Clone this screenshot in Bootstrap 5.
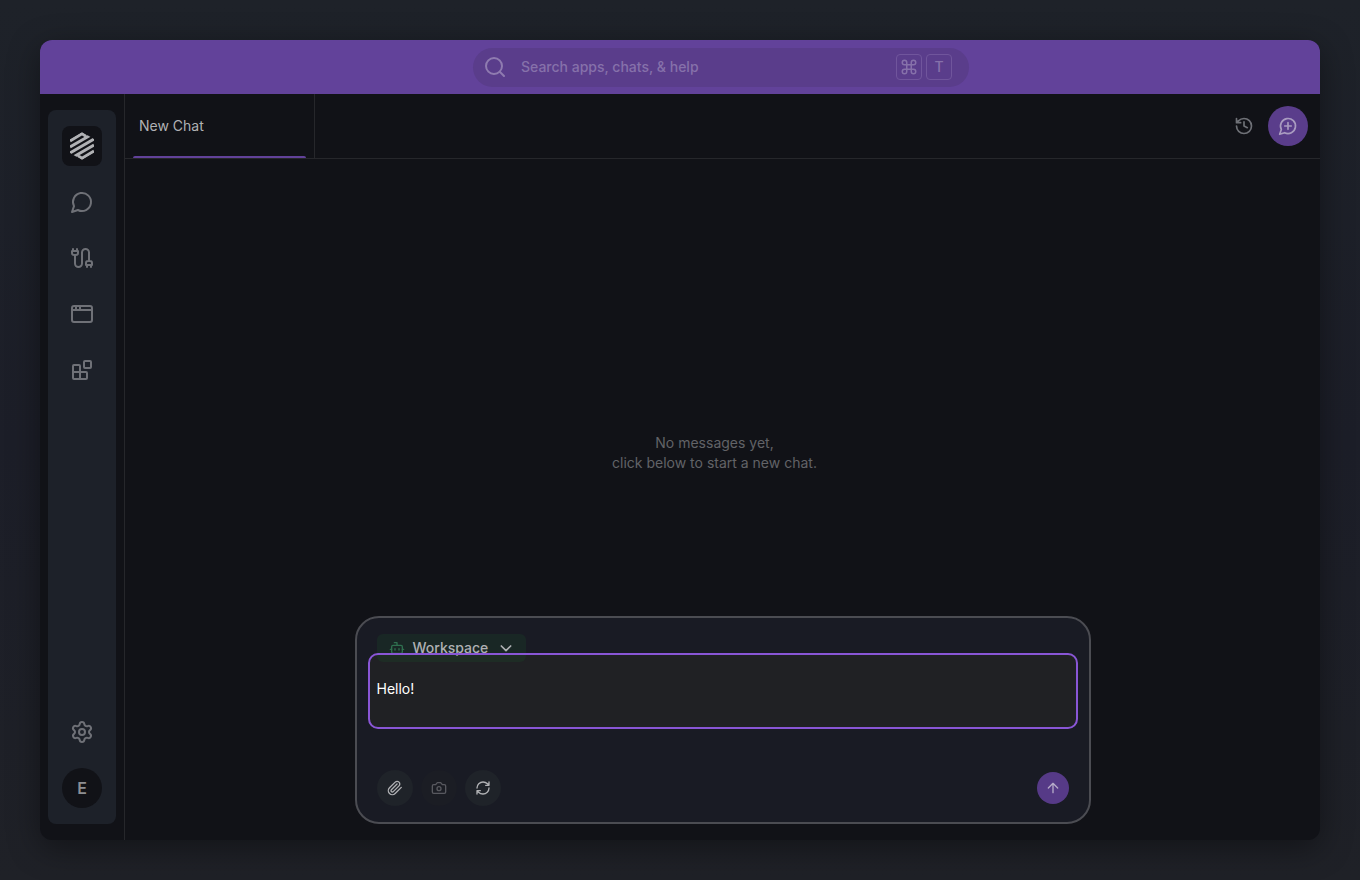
<!DOCTYPE html>
<html lang="en">
<head>
<meta charset="utf-8">
<meta name="viewport" content="width=device-width, initial-scale=1">
<title>New Chat</title>
<link href="https://cdn.jsdelivr.net/npm/bootstrap@5.3.0/dist/css/bootstrap.min.css" rel="stylesheet">
<style>
body{font-family:Inter,"Liberation Sans",sans-serif;font-size:14px;line-height:20px;color:#b0b1b4;background:linear-gradient(180deg,#1e2229,#1c1e28 50%,#1f2127)}
svg{display:block;fill:none;stroke:currentColor;stroke-width:2;stroke-linecap:round;stroke-linejoin:round}
.app-window{background:#111217;border-radius:12px;box-shadow:0 8px 32px rgba(0,0,0,.4)}
.topbar{height:54px;background:#62429a;padding-left:82px}
.search{width:496px;height:39px;background:#5a3d8b;border-radius:20px;color:#8f7bb0;padding:0 17px 0 12px}
.search input{background:none;border:0;outline:0;color:inherit;font-weight:500;min-width:0}
.search input::placeholder{color:#8671aa;opacity:1}
.search kbd{width:26px;height:26px;background:none;border:1px solid #70559c;border-radius:4px;color:#8671aa;font:500 14px/20px Inter,sans-serif}
.rail-wrap{width:85px;border-right:1px solid #26272b;padding:16px 8px}
.rail{background:#1d2129;border-radius:8px;padding:16px 0;gap:16px}
.tile{width:40px;height:40px;color:#6f7177}
.tile.logo{background:#111217;border-radius:8px;color:#b0b1b4}
.tile.avatar{background:#111217;color:#8d8e92;font-size:16px;font-weight:600}
.tabs{height:65px;border-bottom:1px solid #26272b}
.chat-tab{width:190px;border:0;border-right:1px solid #26272b;background:none;color:#b0b1b4;padding:0 14px;font-size:14px}
.chat-tab::after{content:"";position:absolute;left:8px;right:8px;bottom:0;height:2px;background:#62429a;border-radius:2px 2px 0 0}
.round{border:0;border-radius:50%;padding:0;color:#6f7177;background:none}
.new-chat{width:40px;height:40px;background:#5a3d8b;color:#a99bc0}
.history{width:32px;height:32px}
.empty{color:#626367;padding:178px 16px 0 0}
.composer{width:736px;max-width:100%;background:#191b24;border:2px solid #4b4c52;border-radius:24px;padding:16px 20px}
.workspace{height:28px;border:0;border-radius:6px;background:rgba(25,70,40,.3);color:#aeb0b3;font-size:14px;font-weight:500;padding:0 12px;gap:8px;z-index:1}
.workspace svg:last-child{margin-left:2px}
.field{margin:-9px -9px 0}
.field textarea{height:76px;background:#202124;border:0;outline:0;border-radius:10px;padding:26px 9px;color:#fff;resize:none}
.field::after{content:"";position:absolute;inset:0;border:2px solid #8956d6;border-radius:10px;pointer-events:none;z-index:2}
.actions{margin-top:41px}
.tool{width:36px;height:36px;background:#1f2329;color:#b0b1b4}
.tool:disabled{background:#1b1d24;color:#58595f}
.send{width:32px;height:32px;background:#563a87;color:#b5aac8}
</style>
<script src="https://cdn.jsdelivr.net/npm/bootstrap@5.3.0/dist/js/bootstrap.bundle.min.js"></script>
</head>
<body>
<div class="vh-100 d-flex p-4"><div class="app-window flex-fill d-flex flex-column overflow-hidden m-3">
<header class="topbar d-flex align-items-center justify-content-center">
<label class="search d-flex align-items-center">
<svg width="20" height="20" viewBox="0 0 20 20"><circle cx="9" cy="9" r="8"/><path d="m15 15 4 4"/></svg>
<input class="flex-fill ms-3 p-0" type="search" placeholder="Search apps, chats, &amp; help" aria-label="Search apps, chats, and help">
<kbd class="d-flex align-items-center justify-content-center p-0 me-1"><svg width="18" height="18" viewBox="0 0 24 24"><path d="M15 6v12a3 3 0 1 0 3-3H6a3 3 0 1 0 3 3V6a3 3 0 1 0-3 3h12a3 3 0 1 0-3-3"/></svg></kbd>
<kbd class="d-flex align-items-center justify-content-center p-0">T</kbd>
</label>
</header>
<div class="flex-fill d-flex">
<div class="rail-wrap d-flex flex-shrink-0">
<nav class="rail flex-fill d-flex flex-column align-items-center" aria-label="Main">
<a href="#" class="tile logo d-flex align-items-center justify-content-center" aria-label="Home"><svg width="24" height="28" viewBox="0 0 24 28"><defs><clipPath id="hex"><path d="M12 0 24 7v14l-12 7L0 21V7z"/></clipPath></defs><path clip-path="url(#hex)" stroke-width="3" stroke-linecap="butt" stroke-linejoin="miter" d="M0 9 12 1.800l4 2.400M0 15 22 2.200M0 21 24 7M2 25.800 24 13M8 23.800l4 2.400L24 19"/></svg></a>
<a href="#" class="tile d-flex align-items-center justify-content-center" aria-label="Chats"><svg width="24" height="24" viewBox="0 0 24 24"><path d="M7.900 20A9 9 0 1 0 4 16.100L2 22Z"/></svg></a>
<a href="#" class="tile d-flex align-items-center justify-content-center" aria-label="Connections"><svg width="24" height="24" viewBox="0 0 24 24"><path d="M4 9a2 2 0 0 1-2-2V5h6v2a2 2 0 0 1-2 2ZM3 5V3M7 5V3M19 15V6.500a3.500 3.500 0 0 0-7 0v11a3.500 3.500 0 0 1-7 0V9M17 21v-2M21 21v-2M22 19h-6v-2a2 2 0 0 1 2-2h2a2 2 0 0 1 2 2Z"/></svg></a>
<a href="#" class="tile d-flex align-items-center justify-content-center" aria-label="Apps"><svg width="24" height="24" viewBox="0 0 24 24"><rect x="2" y="4" width="20" height="16" rx="2"/><path d="M2 8h20M6 4v4M10 4v4"/></svg></a>
<a href="#" class="tile d-flex align-items-center justify-content-center" aria-label="Extensions"><svg width="24" height="24" viewBox="0 0 24 24"><rect x="14" y="3" width="7" height="7" rx="1"/><path d="M10 21V8a1 1 0 0 0-1-1H4a1 1 0 0 0-1 1v12a1 1 0 0 0 1 1h12a1 1 0 0 0 1-1v-5a1 1 0 0 0-1-1H3"/></svg></a>
<a href="#" class="tile d-flex align-items-center justify-content-center mt-auto" aria-label="Settings"><svg width="24" height="24" viewBox="0 0 24 24"><path d="M9.670 4.140a2.340 2.340 0 0 1 4.660 0 2.340 2.340 0 0 0 3.320 1.910 2.340 2.340 0 0 1 2.330 4.040 2.340 2.340 0 0 0 0 3.830 2.340 2.340 0 0 1-2.330 4.030 2.340 2.340 0 0 0-3.320 1.920 2.340 2.340 0 0 1-4.660 0 2.340 2.340 0 0 0-3.320-1.920 2.340 2.340 0 0 1-2.330-4.030 2.340 2.340 0 0 0 0-3.830A2.340 2.340 0 0 1 6.350 6.050a2.340 2.340 0 0 0 3.320-1.910"/><circle cx="12" cy="12" r="3"/></svg></a>
<button class="tile avatar round" type="button">E</button>
</nav></div>
<main class="flex-fill d-flex flex-column">
<div class="tabs d-flex align-items-center">
<button type="button" class="chat-tab position-relative h-100 text-start">New Chat</button>
<div class="ms-auto d-flex align-items-center gap-2 pe-2 me-1">
<button type="button" class="round history d-flex align-items-center justify-content-center" aria-label="History"><svg width="20" height="20" viewBox="0 0 24 24"><path d="M3 12a9 9 0 1 0 9-9 9.750 9.750 0 0 0-6.740 2.740L3 8M3 3v5h5M12 7v5l4 2"/></svg></button>
<button type="button" class="round new-chat d-flex align-items-center justify-content-center" aria-label="New chat"><svg width="20" height="20" viewBox="0 0 24 24"><path d="M7.900 20A9 9 0 1 0 4 16.100L2 22ZM8 12h8M12 8v8"/></svg></button>
</div></div>
<div class="empty flex-fill d-flex flex-column align-items-center justify-content-center text-center"><p class="mb-0">No messages yet,<br>click below to start a new chat.</p></div>
<form class="composer mx-auto mb-3 mt-5">
<button type="button" class="workspace position-relative d-flex align-items-center"><svg width="16" height="16" viewBox="0 0 24 24" color="#2f704f"><path d="M12 8V4H8M2 14h2M20 14h2M15 13v2M9 13v2"/><rect x="4" y="8" width="16" height="12" rx="2"/></svg>Workspace<svg width="16" height="16" viewBox="0 0 24 24"><path stroke-width="2.500" d="m5 9 7 7 7-7"/></svg></button>
<div class="field position-relative"><textarea class="d-block w-100" aria-label="Message">Hello!</textarea></div>
<div class="actions d-flex align-items-center gap-2">
<button type="button" class="round tool d-flex align-items-center justify-content-center" aria-label="Attach file"><svg width="16" height="16" viewBox="0 0 24 24"><path d="m21.440 11.050-9.190 9.190a6 6 0 0 1-8.490-8.490l8.570-8.570A4 4 0 1 1 18 8.840l-8.590 8.570a2 2 0 0 1-2.830-2.830l8.490-8.480"/></svg></button>
<button type="button" disabled class="round tool d-flex align-items-center justify-content-center" aria-label="Take screenshot"><svg width="16" height="16" viewBox="0 0 24 24"><path d="M14.500 4h-5L7 7H4a2 2 0 0 0-2 2v9a2 2 0 0 0 2 2h16a2 2 0 0 0 2-2V9a2 2 0 0 0-2-2h-3Z"/><circle cx="12" cy="13" r="3"/></svg></button>
<button type="button" class="round tool d-flex align-items-center justify-content-center" aria-label="Refresh"><svg width="16" height="16" viewBox="0 0 24 24"><path d="M3 12a9 9 0 0 1 9-9 9.750 9.750 0 0 1 6.740 2.740L21 8M21 3v5h-5M21 12a9 9 0 0 1-9 9 9.750 9.750 0 0 1-6.740-2.740L3 16M8 16H3v5"/></svg></button>
<button type="submit" class="round send ms-auto d-flex align-items-center justify-content-center" aria-label="Send"><svg width="16" height="16" viewBox="0 0 24 24"><path d="m5 12 7-7 7 7M12 19V5"/></svg></button>
</div></form>
</main></div></div></div>
</body>
</html>
